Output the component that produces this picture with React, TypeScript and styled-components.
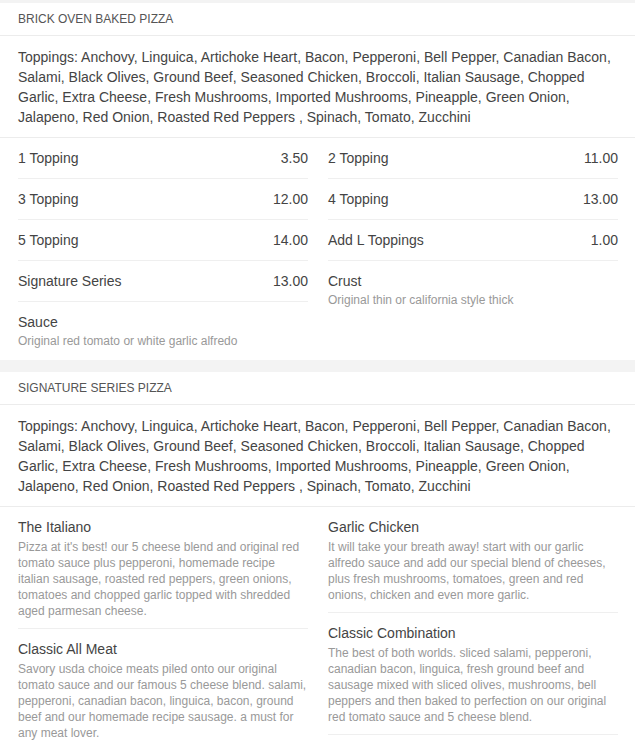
import React from "react";
import styled, { createGlobalStyle } from "styled-components";

const GlobalStyle = createGlobalStyle`
  body {
    margin: 0;
    background: #f3f3f3;
    font-family: "Liberation Sans", Arial, sans-serif;
  }
`;

type Priced = { name: string; price?: string; note?: string };
type Dish = { name: string; text: string };

const toppings =
  "Toppings: Anchovy, Linguica, Artichoke Heart, Bacon, Pepperoni, Bell Pepper, Canadian Bacon, Salami, Black Olives, Ground Beef, Seasoned Chicken, Broccoli, Italian Sausage, Chopped Garlic, Extra Cheese, Fresh Mushrooms, Imported Mushrooms, Pineapple, Green Onion, Jalapeno, Red Onion, Roasted Red Peppers , Spinach, Tomato, Zucchini";

const brickLeft: Priced[] = [
  { name: "1 Topping", price: "3.50" },
  { name: "3 Topping", price: "12.00" },
  { name: "5 Topping", price: "14.00" },
  { name: "Signature Series", price: "13.00" },
  { name: "Sauce", note: "Original red tomato or white garlic alfredo" },
];

const brickRight: Priced[] = [
  { name: "2 Topping", price: "11.00" },
  { name: "4 Topping", price: "13.00" },
  { name: "Add L Toppings", price: "1.00" },
  { name: "Crust", note: "Original thin or california style thick" },
];

const sigLeft: Dish[] = [
  {
    name: "The Italiano",
    text: "Pizza at it's best! our 5 cheese blend and original red tomato sauce plus pepperoni, homemade recipe italian sausage, roasted red peppers, green onions, tomatoes and chopped garlic topped with shredded aged parmesan cheese.",
  },
  {
    name: "Classic All Meat",
    text: "Savory usda choice meats piled onto our original tomato sauce and our famous 5 cheese blend. salami, pepperoni, canadian bacon, linguica, bacon, ground beef and our homemade recipe sausage. a must for any meat lover.",
  },
];

const sigRight: Dish[] = [
  {
    name: "Garlic Chicken",
    text: "It will take your breath away! start with our garlic alfredo sauce and add our special blend of cheeses, plus fresh mushrooms, tomatoes, green and red onions, chicken and even more garlic.",
  },
  {
    name: "Classic Combination",
    text: "The best of both worlds. sliced salami, pepperoni, canadian bacon, linguica, fresh ground beef and sausage mixed with sliced olives, mushrooms, bell peppers and then baked to perfection on our original red tomato sauce and 5 cheese blend.",
  },
];

export default () => {
  return (
    <Page>
      <GlobalStyle />
      <Section>
        <Header>Brick Oven Baked Pizza</Header>
        <Toppings>{toppings}</Toppings>
        <Columns>
          {[brickLeft, brickRight].map((col, i) => (
            <Column key={i}>
              {col.map((item) => (
                <Item key={item.name}>
                  <Line>
                    <span>{item.name}</span>
                    {item.price && <span>{item.price}</span>}
                  </Line>
                  {item.note && <Note>{item.note}</Note>}
                </Item>
              ))}
            </Column>
          ))}
        </Columns>
      </Section>
      <Section>
        <Header>Signature Series Pizza</Header>
        <Toppings>{toppings}</Toppings>
        <Columns>
          {[sigLeft, sigRight].map((col, i) => (
            <Column key={i}>
              {col.map((dish) => (
                <Item key={dish.name} $boxed>
                  <Line>{dish.name}</Line>
                  <Note $gap={2}>{dish.text}</Note>
                </Item>
              ))}
            </Column>
          ))}
        </Columns>
      </Section>
    </Page>
  );
};

const Page = styled.div`
  padding-top: 3px;
  display: flex;
  flex-direction: column;
  gap: 12px;
`;

const Section = styled.section`
  background: #fff;
`;

const Header = styled.div`
  padding: 9px 18px;
  font-size: 12px;
  line-height: 14px;
  text-transform: uppercase;
  color: #555;
  border-bottom: 1px solid #ececec;
`;

const Toppings = styled.p`
  margin: 0;
  padding: 11px 18px 10px;
  font-size: 14px;
  line-height: 20px;
  color: #444;
  border-bottom: 1px solid #ececec;
`;

const Columns = styled.div`
  display: grid;
  grid-template-columns: 290px 290px;
  column-gap: 20px;
  padding: 0 17px 1px 18px;
`;

const Column = styled.div`
  display: flex;
  flex-direction: column;
`;

const Item = styled.div<{ $boxed?: boolean }>`
  padding: 10px 0 ${(p) => (p.$boxed ? "9px" : "10px")};
  border-bottom: 1px solid #efefef;
  &:last-child {
    border-bottom: ${(p) => (p.$boxed ? "1px solid #efefef" : "none")};
  }
`;

const Line = styled.div`
  display: flex;
  justify-content: space-between;
  font-size: 14px;
  line-height: 20px;
  color: #444;
`;

const Note = styled.div<{ $gap?: number }>`
  margin-top: ${(p) => p.$gap ?? 1}px;
  font-size: 12px;
  line-height: 16px;
  color: #999;
`;
